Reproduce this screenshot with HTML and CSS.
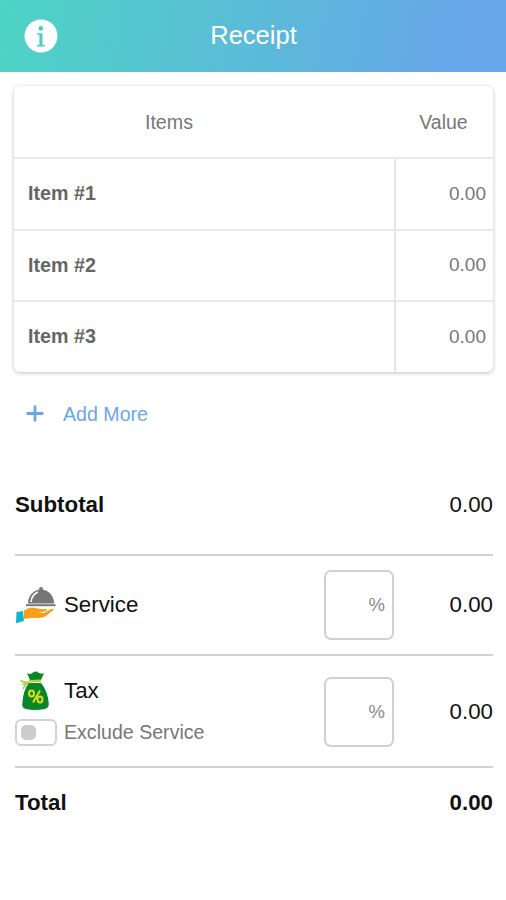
FILE: index.html
```html
<!DOCTYPE html>
<html lang="en">
<head>
    <meta charset="UTF-8">
    <meta name="viewport" content="width=device-width, initial-scale=1.0">
    <title>Receipt</title>
    <link rel="stylesheet" href="styles.css">
</head>
<body>
    <!-- Top bar -->
    <header class="header">
        <svg class="info-icon" viewBox="0 0 34 34">
            <circle cx="17" cy="17" r="16.5" fill="#fff"/>
            <circle cx="16.8" cy="9.400" r="2.300" fill="#50cbc5"/>
            <path d="M13 14.200h5.500v11.800h2.300v1.600H13V26h2.400V15.800H13z" fill="#50cbc5"/>
        </svg>
        <h1 class="header-title">Receipt</h1>
    </header>

    <main class="content">
        <!-- Items table -->
        <section class="items">
            <div class="items-row items-head">
                <div class="item-name">Items</div>
                <div class="item-value">Value</div>
            </div>
            <div class="items-row">
                <div class="item-name">Item #1</div>
                <div class="item-value">0.00</div>
            </div>
            <div class="items-row">
                <div class="item-name">Item #2</div>
                <div class="item-value">0.00</div>
            </div>
            <div class="items-row">
                <div class="item-name">Item #3</div>
                <div class="item-value">0.00</div>
            </div>
        </section>

        <button class="add-btn" type="button">
            <svg class="add-icon" viewBox="0 0 18 18">
                <path d="M9 .5v16M.5 8.500h17" stroke="#6ba6e9" stroke-width="2.8"/>
            </svg>
            Add More
        </button>

        <!-- Totals -->
        <section class="summary">
            <div class="line subtotal">
                <span class="label strong">Subtotal</span>
                <span class="amount">0.00</span>
            </div>

            <div class="line service">
                <svg class="icon" viewBox="0 0 42 40">
                    <path d="M1.500 27l6.500-1 1 10-7 2H1z" fill="#13b5cc"/>
                    <path d="M9 25.500l5-2.500q3-1 6 0l5 1h6q2 1 0 2l-7 2h5l7-4q4-1 2.500 1l-7.500 6q-3 2-7 2H14l-5 1z" fill="#f9a01b"/>
                    <path d="M13 18.500a13 14 0 0 1 26 0z" fill="#777"/>
                    <path d="M16 17q.5-7 7-10" fill="none" stroke="#fff" stroke-width="1.500"/>
                    <path d="M11 19.200h29.500v2H11z" fill="#777"/>
                    <circle cx="26" cy="4" r="2" fill="#777"/>
                </svg>
                <span class="label">Service</span>
                <input class="percent" type="text" placeholder="%">
                <span class="amount">0.00</span>
            </div>

            <div class="line tax">
                <div class="tax-info">
                    <div class="tax-name">
                        <svg class="icon" viewBox="0 0 42 40">
                            <path d="M15 9l-3-7q4 2 6-.5 3-2 5 0 3 2 6 .5l-3 7z" fill="#07862a"/>
                            <path d="M14 10.300l12-.5" stroke="#b5d334" stroke-width="2.500"/>
                            <path d="M14 11q-4 1-8.500-1.500M14 12q-4 1-6 6M12 12.500l-5 1" fill="none" stroke="#a9d14a" stroke-width="1.600"/>
                            <path d="M14 12h12q7 8 7.800 21 0 4-4 5-10 1.800-19 0-4-1-3.500-5Q8 19 14 12z" fill="#07862a"/>
                            <g fill="none" stroke="#e2dc16" stroke-width="2">
                                <ellipse cx="16.500" cy="22.500" rx="2.500" ry="3"/>
                                <ellipse cx="25" cy="28.500" rx="2.500" ry="3"/>
                                <path d="M25 19.500l-7 12"/>
                            </g>
                        </svg>
                        <span class="label">Tax</span>
                    </div>
                    <div class="exclude">
                        <span class="toggle"></span>
                        <span class="exclude-text">Exclude Service</span>
                    </div>
                </div>
                <input class="percent" type="text" placeholder="%">
                <span class="amount">0.00</span>
            </div>

            <div class="line total">
                <span class="label strong">Total</span>
                <span class="amount strong">0.00</span>
            </div>
        </section>
    </main>
</body>
</html>
```

FILE: styles.css
```css
* {
    margin: 0;
    padding: 0;
    box-sizing: border-box;
    font-family: Arial, "Liberation Sans", sans-serif;
}

body {
    background: #fff;
    color: #111;
    font-size: 19.5px;
}

/* Top bar */
.header {
    display: grid;
    grid-template-columns: 60px 1fr 60px;
    align-items: center;
    height: 72px;
    padding-bottom: 1px;
    background: linear-gradient(100deg, #4dd4c4, #5bbbd8 50%, #66a6e9 90%);
}

.info-icon {
    width: 34px;
    height: 34px;
    margin-left: 24px;
}

.header-title {
    padding-left: 1px;
    color: #fff;
    font-size: 25.5px;
    font-weight: 400;
    text-align: center;
}

.content {
    padding: 14px 13px 0 14px;
}

/* Items table */
.items {
    border-radius: 6px;
    overflow: hidden;
    box-shadow: 0 1px 4px rgba(0, 0, 0, 0.25);
}

.items-row {
    display: flex;
    height: 71.6px;
    color: #777;
}

.items-row + .items-row {
    border-top: 2px solid #e8e8e8;
}

.item-name,
.item-value {
    display: flex;
    align-items: center;
}

.item-name {
    flex: 1;
    padding-left: 14px;
    color: #666;
    font-size: 19.7px;
    font-weight: 700;
}

.item-value {
    justify-content: flex-end;
    width: 99px;
    padding-right: 7px;
    border-left: 2px solid #e4e4e4;
    font-size: 19px;
}

.items-row.items-head {
    height: 71px;
}

.items-head .item-name {
    justify-content: center;
    padding: 1px 70px 0 0;
    color: #777;
    font-weight: 400;
}

.items-head .item-value {
    justify-content: center;
    padding: 1px 0 0;
    border-left: none;
    font-size: 19.5px;
}

.add-btn {
    display: flex;
    align-items: center;
    gap: 19px;
    height: 40px;
    margin: 22.6px 0 0 12px;
    border: none;
    background: none;
    color: #6ba6e9;
    font-size: 19.6px;
}

.add-icon {
    width: 18px;
    height: 18px;
}

/* Totals */
.summary {
    margin: 20px 0 0 1px;
}

.line {
    display: flex;
    align-items: center;
    border-bottom: 2px solid #d3d3d3;
    font-size: 22.3px;
}

.subtotal {
    height: 102px;
    padding-top: 2px;
}

.service {
    height: 100px;
}

.tax {
    height: 112px;
    padding-top: 1px;
}

.total {
    height: 70px;
    border-bottom: none;
}

.strong {
    font-weight: 700;
}

.icon {
    width: 42px;
    height: 40px;
    margin-right: 7px;
}

.amount {
    width: 99px;
    margin-left: auto;
    text-align: right;
}

.percent {
    width: 70px;
    height: 70px;
    margin-left: auto;
    padding-right: 7px;
    border: 2px solid #d0d0d0;
    border-radius: 7px;
    background: #fff;
    font-size: 18.5px;
    text-align: right;
}

.percent::placeholder {
    color: #888;
}

.percent + .amount {
    margin-left: 0;
}

.tax-info {
    padding-bottom: 6px;
}

.tax-name,
.exclude {
    display: flex;
    align-items: center;
}

.exclude {
    margin-top: 8px;
    color: #777;
    font-size: 19.6px;
}

.tax-name .label {
    padding-bottom: 1px;
}

.toggle {
    width: 42px;
    height: 27px;
    margin-right: 7px;
    padding: 4px;
    border: 2px solid #d3d3d3;
    border-radius: 6px;
}

.toggle::before {
    content: "";
    display: block;
    width: 15px;
    height: 15px;
    border-radius: 5px;
    background: #ccc;
}
```
